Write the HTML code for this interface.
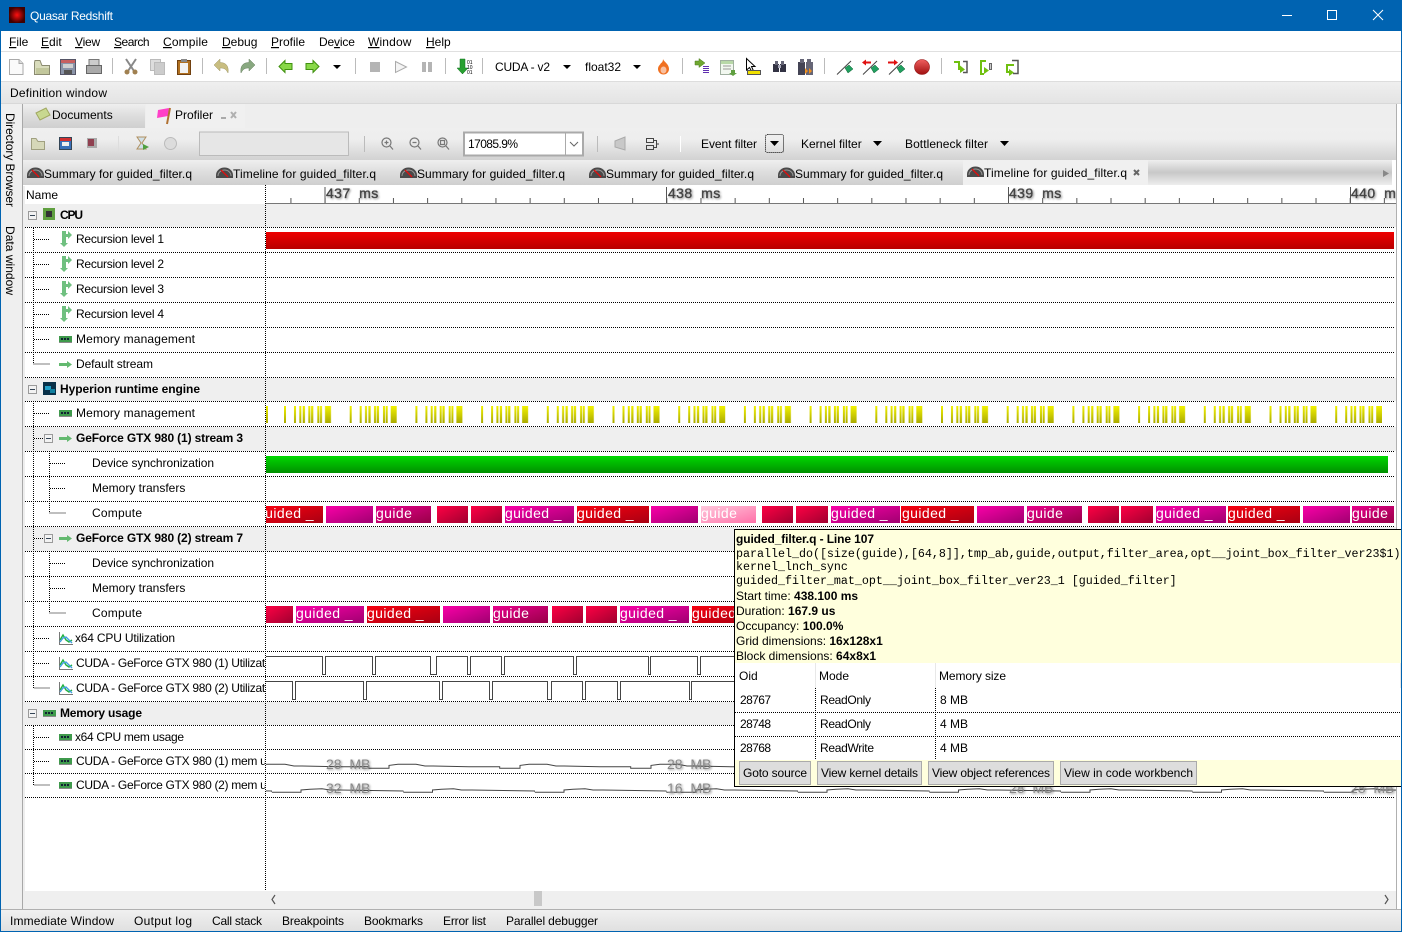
<!DOCTYPE html>
<html><head><meta charset="utf-8"><title>Quasar Redshift</title>
<style>
html,body{margin:0;padding:0;width:1402px;height:932px;overflow:hidden;background:#fff}
svg{display:block}
text{font-family:"Liberation Sans",sans-serif;font-size:12px;fill:#000;white-space:pre}
.b{font-weight:bold}
.m{font-family:"Liberation Mono",monospace;font-size:11.67px}
.k{font-size:14px;letter-spacing:.4px;fill:#fff}
.r{font-size:14px;letter-spacing:.4px;fill:#444;stroke:#444;stroke-width:.35px;filter:url(#sh)}
.l{font-size:14px;letter-spacing:0;fill:#888;filter:url(#sh)}
.u{text-decoration:underline}
</style></head><body>
<svg xmlns="http://www.w3.org/2000/svg" width="1402" height="932" viewBox="0 0 1402 932">
<defs>
<filter id="sh" x="-20%" y="-30%" width="140%" height="170%"><feDropShadow dx="1" dy="1" stdDeviation="1" flood-color="#000" flood-opacity=".45"/></filter>
<linearGradient id="band" x1="0" y1="0" x2="0" y2="1"><stop offset="0" stop-color="#efefef"/><stop offset="1" stop-color="#e4e4e4"/></linearGradient>
<linearGradient id="tb2" x1="0" y1="0" x2="0" y2="1"><stop offset="0" stop-color="#efefef"/><stop offset=".35" stop-color="#eeeeee"/><stop offset="1" stop-color="#d2d2d2"/></linearGradient>
<linearGradient id="tab" x1="0" y1="0" x2="0" y2="1"><stop offset="0" stop-color="#efefef"/><stop offset=".5" stop-color="#dddddd"/><stop offset="1" stop-color="#cfcfcf"/></linearGradient>
<linearGradient id="tabm" x1="0" y1="0" x2="0" y2="1"><stop offset="0" stop-color="#eeeeee"/><stop offset=".5" stop-color="#c8c8c8"/><stop offset="1" stop-color="#eeeeee"/></linearGradient>
<linearGradient id="bot" x1="0" y1="0" x2="0" y2="1"><stop offset="0" stop-color="#f0f0f0"/><stop offset="1" stop-color="#e0e0e0"/></linearGradient>
<linearGradient id="red" x1="0" y1="0" x2="0" y2="1"><stop offset="0" stop-color="#ee0000"/><stop offset="1" stop-color="#b80000"/></linearGradient>
<linearGradient id="grn" x1="0" y1="0" x2="0" y2="1"><stop offset="0" stop-color="#00d800"/><stop offset="1" stop-color="#009000"/></linearGradient>
<linearGradient id="yel" x1="0" y1="0" x2="0" y2="1"><stop offset="0" stop-color="#f2f200"/><stop offset="1" stop-color="#aaaa00"/></linearGradient>
<linearGradient id="gR" x1="0" y1="0" x2="1" y2="1"><stop offset="0" stop-color="#ff0044"/><stop offset="1" stop-color="#a00030"/></linearGradient>
<linearGradient id="gG" x1="0" y1="0" x2="1" y2="1"><stop offset="0" stop-color="#f80010"/><stop offset="1" stop-color="#a80012"/></linearGradient>
<linearGradient id="gM" x1="0" y1="0" x2="1" y2="1"><stop offset="0" stop-color="#fa00a8"/><stop offset="1" stop-color="#a00070"/></linearGradient>
<linearGradient id="gD" x1="0" y1="0" x2="1" y2="1"><stop offset="0" stop-color="#e8008c"/><stop offset="1" stop-color="#980048"/></linearGradient>
<linearGradient id="gP" x1="0" y1="0" x2="1" y2="1"><stop offset="0" stop-color="#ffc8dc"/><stop offset="1" stop-color="#ff70a8"/></linearGradient>
<linearGradient id="ball" x1="0" y1="0" x2="0" y2="1"><stop offset="0" stop-color="#f06060"/><stop offset="1" stop-color="#a01010"/></linearGradient>
<radialGradient id="logo"><stop offset="0" stop-color="#ff1010"/><stop offset="1" stop-color="#400000"/></radialGradient>
<pattern id="bars" patternUnits="userSpaceOnUse" x="284" y="406" width="65.7" height="17">
<rect x="0" width="2" height="17" fill="url(#yel)"/><rect x="10" width="2" height="17" fill="url(#yel)"/><rect x="15.3" width="2" height="17" fill="url(#yel)"/><rect x="18.7" width="2.3" height="17" fill="url(#yel)"/><rect x="24.3" width="2" height="17" fill="url(#yel)"/><rect x="27" width="2.3" height="17" fill="url(#yel)"/><rect x="33.3" width="2" height="17" fill="url(#yel)"/><rect x="36" width="2" height="17" fill="url(#yel)"/><rect x="41" width="6" height="17" fill="url(#yel)"/>
</pattern>
<pattern id="minor" patternUnits="userSpaceOnUse" x="324.6" y="198" width="34.17" height="5"><rect width="1" height="5" fill="#555"/></pattern>
<pattern id="m1" patternUnits="userSpaceOnUse" x="338" y="760" width="131" height="12"><path d="M0 6.7H30.7V8.3H51V5.4L60 4.3H78L87 6H95L131 6.7" fill="none" stroke="#444" stroke-width="1"/></pattern>
<pattern id="m2" patternUnits="userSpaceOnUse" x="272" y="785" width="131.5" height="12"><path d="M0 7.3H29V5L38 4.2 50 3.7 58 5H68L131.5 6V7.3" fill="none" stroke="#444" stroke-width="1"/></pattern>
<clipPath id="names"><rect x="25" y="185" width="240" height="706"/></clipPath>
<clipPath id="tl"><rect x="265" y="185" width="1131" height="706"/></clipPath>
<symbol id="gauge" viewBox="0 0 17 11" width="17" height="11"><path d="M0 11V8A8.500 7.500 0 0 1 17 8V11Z" fill="#4a4a4a"/><path d="M2 9A6.500 6 0 0 1 15 9" fill="none" stroke="#999"/><path d="M5 3L12 10" stroke="#e01010" stroke-width="1.300"/></symbol>
<symbol id="rec" viewBox="0 0 12 16" width="12" height="16"><path d="M2 0H6V3H8V0L12 4 8 8V6H6V12H8L4 16 0 12H2Z" fill="#70c080"/></symbol>
<symbol id="mem" viewBox="0 0 13 7" width="13" height="7"><rect width="13" height="6" fill="#3f9a4c"/><rect x="2" y="2" width="2" height="2" fill="#123"/><rect x="5" y="2" width="2" height="2" fill="#123"/><rect x="8" y="2" width="2" height="2" fill="#123"/><rect y="6" width="13" height="1" fill="#8a8a8a"/></symbol>
<symbol id="arr" viewBox="0 0 13 7" width="13" height="7"><path d="M0 2H8V0L13 3.500 8 7V5H0Z" fill="#63b96f"/></symbol>
<symbol id="chart" viewBox="0 0 14 13" width="14" height="13"><path d="M.5 0V12.500H14" fill="none" stroke="#777"/><path d="M1 8L4 3 7 8 10 10 13 8" fill="none" stroke="#20b040" stroke-width="1.400"/><path d="M1 10L4 6 7 5 10 8 13 11" fill="none" stroke="#40a0e0" stroke-width="1.400"/></symbol>
<symbol id="box" viewBox="0 0 9 9" width="9" height="9"><rect x=".5" y=".5" width="8" height="8" fill="#f2f2f2" stroke="#9a9a9a"/><path d="M2 4.500H7" stroke="#345"/></symbol>
<symbol id="flagc" viewBox="0 0 18 15" width="18" height="15"><path d="M1 14.500L15 1" stroke="#444"/><path d="M9 8L13 5 17 9 12 13Z" fill="#20a060" stroke="#106030" stroke-width=".5"/></symbol>
</defs>

<!-- chrome -->
<rect width="1402" height="932" fill="#ffffff"/>
<rect width="1402" height="31" fill="#0063b1"/>
<rect x="9" y="7" width="16" height="16" fill="url(#logo)"/>
<text x="30" y="20" style="fill:#fff" textLength="83">Quasar Redshift</text>
<path d="M1282 15.500H1292" stroke="#fff"/><rect x="1327.500" y="10.500" width="9" height="9" fill="none" stroke="#fff"/><path d="M1373 10L1383 20M1383 10L1373 20" stroke="#fff"/>
<rect y="51" width="1402" height="1" fill="#e0e0e0"/>
<rect y="81" width="1402" height="1" fill="#dddddd"/>
<rect y="82" width="1402" height="21" fill="url(#band)"/>
<rect y="103" width="1402" height="1" fill="#d8d8d8"/>
<rect y="104" width="1396" height="24" fill="#eeeeee"/>
<rect x="1396" y="104" width="1" height="805" fill="#b0b0b0"/>

<!-- menu -->
<g>
<text x="9" y="46"><tspan class="u">F</tspan>ile</text>
<text x="41" y="46"><tspan class="u">E</tspan>dit</text>
<text x="75" y="46" style="letter-spacing:-.2px"><tspan class="u">V</tspan>iew</text>
<text x="114" y="46" style="letter-spacing:-.5px"><tspan class="u">S</tspan>earch</text>
<text x="163" y="46" style="letter-spacing:.15px"><tspan class="u">C</tspan>ompile</text>
<text x="222" y="46"><tspan class="u">D</tspan>ebug</text>
<text x="271" y="46"><tspan class="u">P</tspan>rofile</text>
<text x="319" y="46" style="letter-spacing:-.15px">De<tspan class="u">v</tspan>ice</text>
<text x="368" y="46" style="letter-spacing:.15px"><tspan class="u">W</tspan>indow</text>
<text x="426" y="46"><tspan class="u">H</tspan>elp</text>
</g>

<!-- toolbar 1 -->
<g stroke-width="1">
<path d="M9.500 59.500H19L23 63.500V74.500H9.500Z" fill="#fafafa" stroke="#aaa"/><path d="M19 59.500V63.500H23" fill="#ddd" stroke="#aaa"/>
<path d="M34.500 62.500V74.500H49.500V65.500H42L40 60.500H35Z" fill="#d9dcbc" stroke="#8a8a70"/><rect x="36" y="68" width="13" height="6" fill="#c2c79c"/>
<rect x="60.500" y="59.500" width="15" height="15" fill="#8a94a8" stroke="#556"/><rect x="61" y="60" width="14" height="3" fill="#c86060"/><rect x="63" y="64" width="10" height="4" fill="#d0d0d0"/><rect x="64" y="70" width="8" height="4" fill="#555"/>
<rect x="89" y="59.500" width="10" height="6" fill="#ccc" stroke="#777"/><rect x="86.500" y="65.500" width="15" height="8" fill="#aaa" stroke="#666"/>
<rect x="112" y="58" width="1" height="16" fill="#bbb"/>
<path d="M126 59L134 71M136 59L128 71" stroke="#888" stroke-width="2"/><circle cx="127" cy="72" r="2.500" fill="#a08050"/><circle cx="135" cy="72" r="2.500" fill="#a08050"/>
<rect x="150.500" y="59.500" width="10" height="11" fill="#ddd" stroke="#bbb"/><rect x="154.500" y="62.500" width="10" height="12" fill="#ccc" stroke="#bbb"/>
<rect x="177.500" y="60.500" width="13" height="14" fill="#b07020" stroke="#704010"/><rect x="180" y="63" width="8" height="10" fill="#f2f2f2"/><rect x="181" y="59" width="6" height="3" fill="#888"/>
<rect x="202" y="58" width="1" height="16" fill="#bbb"/>
<path d="M214 65L220 59V62.500C226 62.500 229 66 228 73C226 69 224 68 220 68V71Z" fill="#c8bd80" stroke="#9f9868" stroke-width=".5"/>
<path d="M255 65L249 59V62.500C243 62.500 240 66 241 73C243 69 245 68 249 68V71Z" fill="#88a880" stroke="#688060" stroke-width=".5"/>
<rect x="266" y="58" width="1" height="16" fill="#bbb"/>
<path d="M279 66.500L285 60.500V63.500H292V69.500H285V72.500Z" fill="#88d848" stroke="#409010"/>
<path d="M319 66.500L313 60.500V63.500H306V69.500H313V72.500Z" fill="#88d848" stroke="#409010"/>
<path d="M333 65H341L337 69Z" fill="#000"/>
<rect x="355" y="58" width="1" height="16" fill="#bbb"/>
<rect x="370" y="62" width="10" height="10" fill="#b4b4b4"/>
<path d="M395.500 61.500L406.500 67 395.500 72.500Z" fill="#f4f4f4" stroke="#aaa"/>
<rect x="422" y="62" width="4" height="10" fill="#b4b4b4"/><rect x="428" y="62" width="4" height="10" fill="#b4b4b4"/>
<rect x="445" y="58" width="1" height="16" fill="#bbb"/>
<path d="M460 59H465V68H468L462.500 74 457 68H460Z" fill="#28a030" stroke="#107020" stroke-width=".5"/>
<text x="467" y="64" style="font-size:5px">01</text><text x="467" y="69" style="font-size:5px">10</text><text x="467" y="74" style="font-size:5px">01</text>
<rect x="482" y="58" width="1" height="16" fill="#bbb"/>
<text x="495" y="71" textLength="55">CUDA - v2</text><path d="M563 65H571L567 69Z" fill="#000"/>
<text x="585" y="71">float32</text><path d="M633 65H641L637 69Z" fill="#000"/>
<path d="M663 59C664 62 669 64 669 69A5.500 5.500 0 0 1 658 69C658 66 660 65 661 63C662 63 663 61 663 59Z" fill="#f07020"/><ellipse cx="663.500" cy="70" rx="3" ry="3.500" fill="#f8c0a0"/>
<rect x="682" y="58" width="1" height="16" fill="#bbb"/>
<path d="M695 61H699V58.500L705 63 699 67.500V65H695Z" fill="#70a830" stroke="#4a7a20" stroke-width=".5"/><path d="M703 66.500H709M703 68.500H709M703 70.500H709M703 72.500H709" stroke="#6030b0"/>
<rect x="720.500" y="60.500" width="13" height="14" fill="#f2f8f0" stroke="#a0b0a0"/><rect x="721" y="61" width="12" height="3" fill="#b8d8a8"/><path d="M723 66H731M723 69H731" stroke="#999"/><path d="M731 70H735V73H737L733 76 729 73H731Z" fill="#60a040"/>
<path d="M746.500 58.500V70L749.500 67.500 752 72 753.500 71 751.500 66.500H755Z" fill="#fff" stroke="#000"/><rect x="747.500" y="70.500" width="13" height="4" fill="#f0e000" stroke="#555" stroke-width="1"/>
<rect x="773" y="64" width="6" height="8" fill="#334"/><rect x="780" y="64" width="6" height="8" fill="#334"/><rect x="775" y="61" width="3" height="4" fill="#667"/><rect x="781" y="61" width="3" height="4" fill="#667"/><rect x="778" y="65" width="3" height="3" fill="#aab"/>
<rect x="798" y="62" width="7" height="13" fill="#445"/><rect x="806" y="62" width="7" height="13" fill="#667"/><rect x="800" y="59" width="4" height="4" fill="#667"/><rect x="807" y="59" width="4" height="4" fill="#667"/><path d="M805 68L808 71 805 74ZM809 68L812 71 809 74Z" fill="#f09020"/>
<rect x="824" y="58" width="1" height="16" fill="#bbb"/>
<use href="#flagc" x="836" y="60"/>
<use href="#flagc" x="862" y="60"/><path d="M862 62.500L866 59.500V61.500H871V63.500H866V65.500Z" fill="#e01010"/>
<use href="#flagc" x="888" y="60"/><path d="M898 62.500L894 59.500V61.500H888V63.500H894V65.500Z" fill="#e01010"/>
<circle cx="922" cy="67" r="7.500" fill="url(#ball)" stroke="#901010" stroke-width=".6"/>
<rect x="941" y="58" width="1" height="16" fill="#bbb"/>
<!-- step into -->
<path d="M954 62H959V69H961" fill="none" stroke="#70c010" stroke-width="2"/><path d="M960 65.500L965 69.500 960 73Z" fill="#70c010"/><path d="M963 61.500H967V72.500H963" fill="none" stroke="#555" stroke-width="1.500"/>
<!-- step over -->
<path d="M986 61H981V74H984" fill="none" stroke="#70c010" stroke-width="2"/><path d="M984 67L989 70.500 984 74Z" fill="#70c010"/><rect x="989.500" y="63.500" width="2" height="6" fill="#ccc" stroke="#666"/>
<!-- step out -->
<path d="M1012 60.500H1018V73.500H1013" fill="none" stroke="#555" stroke-width="1.500"/><path d="M1014 65H1007V72H1010" fill="none" stroke="#70c010" stroke-width="2"/><path d="M1009 69L1014 72.500 1009 76Z" fill="#70c010"/>
</g>

<!-- definition window -->
<text x="10" y="97" textLength="97">Definition window</text>

<!-- left strip -->
<rect x="1" y="104" width="21" height="805" fill="#efefef"/>
<rect x="22" y="104" width="1" height="805" fill="#a8a8a8"/>
<rect x="23" y="186" width="2" height="723" fill="#eeeeee"/>
<text transform="translate(6 113) rotate(90)" textLength="94">Directory Browser</text>
<text transform="translate(6 226) rotate(90)" textLength="69">Data window</text>

<!-- dock tabs -->
<rect x="23" y="104" width="122" height="24" fill="url(#tab)"/>
<rect x="146" y="104" width="99" height="24" fill="#f0f0f0"/>
<path d="M36 113L46 108 50 115 40 120Z" fill="#c8d890" stroke="#a0a860"/>
<text x="52" y="119">Documents</text>
<path d="M158 110L169 108 168 116 157 118Z" fill="#ff40c8"/><path d="M170 108L167 124" stroke="#b07030" stroke-width="2"/>
<text x="175" y="119">Profiler</text>
<rect x="221" y="117" width="5" height="2" fill="#aaa"/><path d="M231 112L236 118M236 112L231 118" stroke="#b0b0b0" stroke-width="2"/>

<!-- toolbar 2 -->
<rect x="23" y="128" width="1373" height="32" fill="url(#tb2)"/>
<path d="M31.500 138.500V149.500H44.500V141.500H38L36 138.500Z" fill="#d6d8b8" stroke="#a0a080"/>
<rect x="59.500" y="137.500" width="12" height="12" fill="#3a70b8" stroke="#345"/><rect x="60" y="138" width="11" height="3" fill="#d03030"/><rect x="62" y="142" width="7" height="4" fill="#eee"/>
<rect x="87" y="138" width="10" height="10" fill="#aaa"/><rect x="88" y="139" width="6" height="7" fill="#904050"/>
<rect x="118" y="136" width="1" height="16" fill="#fff"/><rect x="118" y="136" width="1" height="16" fill="#bbb" opacity=".5"/>
<path d="M137 137H146L142 143 146 149H137L141 143Z" fill="#d0e0e8" stroke="#b09060"/><path d="M143 144L149 147 143 150Z" fill="#50a040"/>
<circle cx="170.500" cy="143.500" r="6" fill="#dcdcdc" stroke="#bbb"/>
<rect x="199.500" y="132" width="149" height="23.500" fill="#e6e6e6" stroke="#bbb"/>
<rect x="364" y="136" width="1" height="16" fill="#bbb"/>
<g fill="none" stroke="#777" stroke-width="1.200">
<circle cx="386.500" cy="142.500" r="4.500"/><path d="M390 146L393 149.500M384.500 142.500H388.500M386.500 140.500V144.500"/>
<circle cx="414.500" cy="142.500" r="4.500"/><path d="M418 146L421 149.500M412.500 142.500H416.500"/>
<circle cx="442.500" cy="142.500" r="4.500"/><path d="M446 146L449 149.500M440.500 140.500H444.500V144.500H440.500Z"/>
</g>
<rect x="464" y="132.500" width="119" height="23" fill="#fff" stroke="#aaa" stroke-width="2"/>
<rect x="565" y="133" width="1" height="22" fill="#aaa"/>
<path d="M570 142L574 146 578 142" fill="none" stroke="#666"/>
<text x="468" y="148" textLength="50">17085.9%</text>
<rect x="597" y="136" width="1" height="16" fill="#bbb"/>
<path d="M615 141L625 137V150L615 147Z" fill="#c8c8c8" stroke="#aaa"/>
<path d="M646.500 138.500H653.500V142.500H646.500ZM646.500 145.500H653.500V149.500H646.500ZM653.500 140.500H656.500V147.500H653.500M656.500 144H659" fill="none" stroke="#444"/>
<rect x="680" y="136" width="1" height="16" fill="#fff"/>
<text x="701" y="148" textLength="56">Event filter</text>
<rect x="765.500" y="134.500" width="18" height="18" rx="2" fill="none" stroke="#000" stroke-dasharray="1 1"/>
<path d="M770 141H779L774.500 146Z" fill="#000"/>
<text x="801" y="148">Kernel filter</text><path d="M873 141H882L877.500 146Z" fill="#000"/>
<text x="905" y="148" textLength="83">Bottleneck filter</text><path d="M1000 141H1009L1004.500 146Z" fill="#000"/>

<!-- doc tabs -->
<rect x="23" y="160" width="940" height="25" fill="url(#tab)"/>
<rect x="963" y="160" width="185" height="25" fill="#f0f0f0"/>
<rect x="1148" y="160" width="244" height="25" fill="url(#tabm)"/>
<path d="M1383 170L1389 173.500 1383 177Z" fill="#888"/>
<use href="#gauge" x="27" y="167"/><text x="44" y="178" textLength="148">Summary for guided_filter.q</text>
<use href="#gauge" x="216" y="167"/><text x="233" y="178" textLength="143">Timeline for guided_filter.q</text>
<use href="#gauge" x="400" y="167"/><text x="417" y="178" textLength="148">Summary for guided_filter.q</text>
<use href="#gauge" x="589" y="167"/><text x="606" y="178" textLength="148">Summary for guided_filter.q</text>
<use href="#gauge" x="778" y="167"/><text x="795" y="178" textLength="148">Summary for guided_filter.q</text>
<use href="#gauge" x="967" y="166"/><text x="984" y="177" textLength="143">Timeline for guided_filter.q</text>
<path d="M1134 170L1139 175M1139 170L1134 175" stroke="#666" stroke-width="2"/>

<!-- main area -->
<rect x="25" y="185" width="1371" height="706" fill="#fff"/>
<rect x="25" y="204" width="1371" height="23" fill="#efefef"/>
<rect x="25" y="378" width="1371" height="23" fill="#efefef"/>
<rect x="25" y="427" width="1371" height="24" fill="#efefef"/>
<rect x="25" y="527" width="1371" height="24" fill="#efefef"/>
<rect x="25" y="702" width="1371" height="23" fill="#efefef"/>

<!-- ruler -->
<rect x="265" y="203" width="1131" height="1" fill="#777"/>
<rect x="265" y="198" width="1131" height="5" fill="url(#minor)"/>
<path d="M325 187V203M666.500 187V203M1008.500 187V203M1350.500 187V203" stroke="#555"/>
<g clip-path="url(#tl)">
<text class="r" x="326" y="198">437  ms</text>
<text class="r" x="668" y="198">438  ms</text>
<text class="r" x="1009" y="198">439  ms</text>
<text class="r" x="1351" y="198">440  ms</text>
</g>
<text x="26" y="199">Name</text>

<!-- dotted lines -->
<path d="M25 227.500H1395M25 252.500H1395M25 277.500H1395M25 302.500H1395M25 327.500H1395M25 352.500H1395M25 377.500H1395M25 401.500H1395M25 426.500H1395M25 451.500H1395M25 476.500H1395M25 501.500H1395M25 526.500H1395M25 551.500H1395M25 576.500H1395M25 601.500H1395M25 626.500H1395M25 651.500H1395M25 676.500H1395M25 701.500H1395M25 725.500H1395M25 749.500H1395M25 773.500H1395M25 797.500H1395" stroke="#000" stroke-dasharray="1 1" fill="none"/>
<path d="M265.500 185V891" stroke="#000" stroke-dasharray="1 1" fill="none"/>
<path d="M33.500 228V364H50M34 239.500H50M34 264.500H50M34 289.500H50M34 314.500H50M34 339.500H50M33.500 401V688H50M34 413.500H50M34 438.500H44M34 538.500H44M34 638.500H50M34 663.500H50M33.500 726V785H50M34 737.500H50M34 761.500H50M49.500 451V513H66M50 463.500H66M50 488.500H66M49.500 551V613H66M50 563.500H66M50 588.500H66" stroke="#000" stroke-dasharray="1 1" fill="none"/>

<!-- tree -->
<use href="#box" x="28" y="211"/><use href="#box" x="28" y="385"/><use href="#box" x="44" y="434"/><use href="#box" x="44" y="534"/><use href="#box" x="28" y="709"/>
<rect x="43" y="208" width="12" height="12" fill="#60a040"/><rect x="46" y="211" width="6" height="6" fill="#333"/>
<rect x="43" y="382" width="13" height="13" fill="#083048"/><rect x="45" y="386" width="6" height="4" fill="#20a0c8"/><rect x="50" y="389" width="5" height="4" fill="#1080a0"/>
<use href="#mem" x="43" y="710"/>
<text class="b" x="60" y="219" textLength="23">CPU</text>
<text class="b" x="60" y="393" textLength="140">Hyperion runtime engine</text>
<text class="b" x="60" y="717" textLength="82">Memory usage</text>
<use href="#rec" x="60" y="231"/><text x="76" y="243" textLength="88">Recursion level 1</text>
<use href="#rec" x="60" y="256"/><text x="76" y="268" textLength="88">Recursion level 2</text>
<use href="#rec" x="60" y="281"/><text x="76" y="293" textLength="88">Recursion level 3</text>
<use href="#rec" x="60" y="306"/><text x="76" y="318" textLength="88">Recursion level 4</text>
<use href="#mem" x="59" y="336"/><text x="76" y="343" textLength="119">Memory management</text>
<use href="#arr" x="59" y="361"/><text x="76" y="368" textLength="77">Default stream</text>
<use href="#mem" x="59" y="410"/><text x="76" y="417" textLength="119">Memory management</text>
<use href="#arr" x="59" y="435"/><text class="b" x="76" y="442" textLength="167">GeForce GTX 980 (1) stream 3</text>
<text x="92" y="467" textLength="122">Device synchronization</text>
<text x="92" y="492">Memory transfers</text>
<text x="92" y="517" textLength="50">Compute</text>
<use href="#arr" x="59" y="535"/><text class="b" x="76" y="542" textLength="167">GeForce GTX 980 (2) stream 7</text>
<text x="92" y="567" textLength="122">Device synchronization</text>
<text x="92" y="592">Memory transfers</text>
<text x="92" y="617" textLength="50">Compute</text>
<use href="#chart" x="59" y="632"/><text x="75" y="642" textLength="100">x64 CPU Utilization</text>
<g clip-path="url(#names)">
<use href="#chart" x="59" y="657"/><text x="76" y="667" style="letter-spacing:-.3px">CUDA - GeForce GTX 980 (1) Utilization</text>
<use href="#chart" x="59" y="682"/><text x="76" y="692" style="letter-spacing:-.3px">CUDA - GeForce GTX 980 (2) Utilization</text>
<use href="#mem" x="59" y="734"/><text x="75" y="741" textLength="109">x64 CPU mem usage</text>
<use href="#mem" x="59" y="758"/><text x="76" y="765" style="letter-spacing:-.3px">CUDA - GeForce GTX 980 (1) mem usage</text>
<use href="#mem" x="59" y="782"/><text x="76" y="789" style="letter-spacing:-.3px">CUDA - GeForce GTX 980 (2) mem usage</text>
</g>

<!-- timeline -->
<rect x="266" y="232" width="1128" height="17" fill="url(#red)"/>
<rect x="266" y="456" width="1122" height="17" fill="url(#grn)"/>
<rect x="266" y="406" width="1116" height="17" fill="url(#bars)"/>
<rect x="266" y="406" width="2" height="17" fill="url(#yel)"/>

<g clip-path="url(#tl)">
<rect x="266" y="506" width="57" height="17" fill="url(#gG)"/><text class="k" x="257" y="518">guided _</text>
<rect x="326" y="506" width="47" height="17" fill="url(#gM)"/>
<rect x="376" y="506" width="55" height="17" fill="url(#gD)"/><text class="k" x="376" y="518">guide</text>
<rect x="437" y="506" width="31" height="17" fill="url(#gR)"/>
<rect x="471" y="506" width="31" height="17" fill="url(#gR)"/>
<rect x="505" y="506" width="69" height="17" fill="url(#gM)"/><text class="k" x="505" y="518">guided _</text>
<rect x="577" y="506" width="72" height="17" fill="url(#gG)"/><text class="k" x="577" y="518">guided _</text>
<rect x="651" y="506" width="47" height="17" fill="url(#gM)"/>
<rect x="701" y="506" width="55" height="17" fill="url(#gP)"/><text class="k" x="701" y="518">guide</text>
<rect x="762" y="506" width="31" height="17" fill="url(#gR)"/>
<rect x="796" y="506" width="32" height="17" fill="url(#gR)"/>
<rect x="831" y="506" width="69" height="17" fill="url(#gM)"/><text class="k" x="831" y="518">guided _</text>
<rect x="901" y="506" width="73" height="17" fill="url(#gG)"/><text class="k" x="902" y="518">guided _</text>
<rect x="977" y="506" width="47" height="17" fill="url(#gM)"/>
<rect x="1027" y="506" width="55" height="17" fill="url(#gD)"/><text class="k" x="1027" y="518">guide</text>
<rect x="1088" y="506" width="31" height="17" fill="url(#gR)"/>
<rect x="1121" y="506" width="32" height="17" fill="url(#gR)"/>
<rect x="1156" y="506" width="70" height="17" fill="url(#gM)"/><text class="k" x="1156" y="518">guided _</text>
<rect x="1228" y="506" width="72" height="17" fill="url(#gG)"/><text class="k" x="1228" y="518">guided _</text>
<rect x="1303" y="506" width="47" height="17" fill="url(#gM)"/>
<rect x="1352" y="506" width="42" height="17" fill="url(#gD)"/><text class="k" x="1352" y="518">guide</text>

<rect x="266" y="606" width="27" height="17" fill="url(#gR)"/>
<rect x="296" y="606" width="68" height="17" fill="url(#gM)"/><text class="k" x="296" y="618">guided _</text>
<rect x="367" y="606" width="73" height="17" fill="url(#gG)"/><text class="k" x="367" y="618">guided _</text>
<rect x="443" y="606" width="47" height="17" fill="url(#gM)"/>
<rect x="493" y="606" width="55" height="17" fill="url(#gD)"/><text class="k" x="493" y="618">guide</text>
<rect x="552" y="606" width="31" height="17" fill="url(#gR)"/>
<rect x="586" y="606" width="31" height="17" fill="url(#gR)"/>
<rect x="620" y="606" width="69" height="17" fill="url(#gM)"/><text class="k" x="620" y="618">guided _</text>
<rect x="692" y="606" width="60" height="17" fill="url(#gG)"/><text class="k" x="692" y="618">guided _</text>
</g>

<path d="M266 656.500H322.500V674.500H325.500V656.500H372.500V674.500H375.500V656.500H430.500V674.500H436.500V656.500H467.500V674.500H470.500V656.500H501.500V674.500H504.500V656.500H573.500V674.500H576.500V656.500H648.500V674.500H650.500V656.500H697.500V674.500H700.500V656.500H740" fill="none" stroke="#444"/>
<path d="M266 681.500H292.500V699.500H295.500V681.500H363.500V699.500H366.500V681.500H439.500V699.500H442.500V681.500H489.500V699.500H492.500V681.500H547.500V699.500H551.500V681.500H582.500V699.500H585.500V681.500H617.500V699.500H620.500V681.500H689.500V699.500H691.500V681.500H740" fill="none" stroke="#444"/>

<rect x="266" y="760" width="1130" height="12" fill="url(#m1)"/>
<rect x="266" y="785" width="1130" height="12" fill="url(#m2)"/>
<text class="l" x="326" y="769">28  MB</text>
<text class="l" x="667" y="769">28  MB</text>
<text class="l" x="326" y="793">32  MB</text>
<text class="l" x="667" y="793">16  MB</text>
<text class="l" x="1009" y="793">28  MB</text>
<text class="l" x="1350" y="793">28  MB</text>

<!-- scrollbar -->
<rect x="25" y="891" width="1371" height="18" fill="#efefef"/>
<rect x="534" y="891" width="8" height="15" fill="#c8c8c8"/>
<path d="M275 895L272 899.500 275 904M1385 895L1388 899.500 1385 904" fill="none" stroke="#555" stroke-width="1.200"/>

<!-- bottom -->
<rect y="909" width="1402" height="1" fill="#b0b0b0"/>
<rect y="910" width="1402" height="21" fill="url(#bot)"/>
<text x="10" y="925" textLength="104">Immediate Window</text>
<text x="134" y="925" textLength="58">Output log</text>
<text x="212" y="925" textLength="50">Call stack</text>
<text x="282" y="925" textLength="62">Breakpoints</text>
<text x="364" y="925" textLength="59">Bookmarks</text>
<text x="443" y="925" textLength="43">Error list</text>
<text x="506" y="925" textLength="92">Parallel debugger</text>

<!-- tooltip -->
<rect x="734.500" y="529.500" width="668" height="257" fill="#ffffdd" stroke="#000"/>
<text class="b" x="736" y="543" textLength="138">guided_filter.q - Line 107</text>
<text class="m" x="736" y="557">parallel_do([size(guide),[64,8]],tmp_ab,guide,output,filter_area,opt__joint_box_filter_ver23$1)</text>
<text class="m" x="736" y="570">kernel_lnch_sync</text>
<text class="m" x="736" y="584">guided_filter_mat_opt__joint_box_filter_ver23_1 [guided_filter]</text>
<text x="736" y="600">Start time: <tspan class="b">438.100 ms</tspan></text>
<text x="736" y="615">Duration: <tspan class="b">167.9 us</tspan></text>
<text x="736" y="630">Occupancy: <tspan class="b">100.0%</tspan></text>
<text x="736" y="645">Grid dimensions: <tspan class="b">16x128x1</tspan></text>
<text x="736" y="660">Block dimensions: <tspan class="b">64x8x1</tspan></text>
<rect x="735" y="663" width="667" height="97" fill="#fff"/>
<rect x="815" y="663" width="1" height="25" fill="#e8e8e8"/><rect x="935" y="663" width="1" height="25" fill="#e8e8e8"/><rect x="1400" y="663" width="1" height="25" fill="#e8e8e8"/>
<path d="M735 712.500H1402M735 736.500H1402M815.500 688V760M935.500 688V760" stroke="#000" stroke-dasharray="1 1" fill="none"/>
<text x="739" y="680">Oid</text><text x="819" y="680">Mode</text><text x="939" y="680" textLength="67">Memory size</text>
<text x="740" y="704" textLength="31">28767</text><text x="820" y="704" textLength="51">ReadOnly</text><text x="940" y="704">8 MB</text>
<text x="740" y="728" textLength="31">28748</text><text x="820" y="728" textLength="51">ReadOnly</text><text x="940" y="728">4 MB</text>
<text x="740" y="752" textLength="31">28768</text><text x="820" y="752" textLength="54">ReadWrite</text><text x="940" y="752">4 MB</text>
<g fill="#dddddd" stroke="#aaaaaa">
<rect x="739.500" y="761.500" width="71" height="23"/><rect x="817.500" y="761.500" width="104" height="23"/><rect x="928.500" y="761.500" width="125" height="23"/><rect x="1060.500" y="761.500" width="136" height="23"/>
</g>
<text x="743" y="777" textLength="64">Goto source</text>
<text x="821" y="777" textLength="97">View kernel details</text>
<text x="932" y="777" textLength="118">View object references</text>
<text x="1064" y="777" textLength="129">View in code workbench</text>

<!-- window border -->
<rect x="0" y="0" width="1" height="932" fill="#0063b1"/>
<rect x="1401" y="0" width="1" height="932" fill="#0063b1"/>
<rect x="0" y="931" width="1402" height="1" fill="#0063b1"/>
</svg>
</body></html>
